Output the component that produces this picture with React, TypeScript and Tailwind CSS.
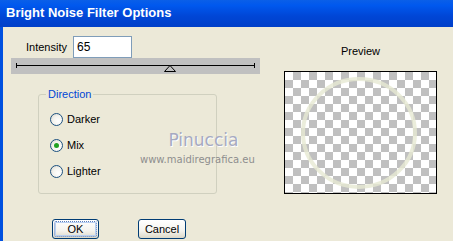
import React from "react";

const font = { fontFamily: '"Liberation Sans", Arial, sans-serif' };
const wm = { fontFamily: '"DejaVu Sans", sans-serif' };

function Radio({ label, checked }: { label: string; checked?: boolean }) {
  return (
    <div className="flex h-[13px] items-center gap-[4px]">
      <span className="flex h-[13px] w-[13px] items-center justify-center rounded-full border border-[#1c5180] bg-[radial-gradient(circle_at_65%_65%,#ffffff_0%,#f4f3ee_50%,#d6d3c8_100%)]">
        {checked && <span className="h-[5px] w-[5px] rounded-full bg-[#21a121]" />}
      </span>
      <span className="text-[11px] leading-[13px] text-black">{label}</span>
    </div>
  );
}

export default function App() {
  return (
    <div className="relative flex h-[241px] w-[453px] flex-col overflow-hidden bg-[#ece9d8]" style={font}>
      <div className="flex h-[27px] items-center bg-[linear-gradient(180deg,#0a5fe8_0%,#0058ee_20%,#0046d6_60%,#003fc8_100%)] pl-[6px] pb-[1px] text-[13px] font-bold text-white">
        Bright Noise Filter Options
      </div>

      <div className="relative flex flex-1 border-l-[3px] border-[#0050e0]">
        <div className="flex w-[262px] flex-col">
          <div className="mt-[9px] flex items-center pl-[23px]">
            <span className="text-[11px] leading-[13px] text-black">Intensity</span>
            <div className="ml-[6px] flex h-[22px] w-[59px] items-center border border-[#7f9db9] bg-white pl-[3px] text-[12px] text-black">
              65
            </div>
          </div>

          <div className="relative ml-[8px] h-[16px] w-[249px] bg-[#c0c0c0]">
            <div className="absolute left-[5px] top-[7px] h-px w-[239px] bg-black" />
            <div className="absolute left-[5px] top-[5px] h-[5px] w-px bg-black" />
            <div className="absolute left-[243px] top-[5px] h-[5px] w-px bg-black" />
            <svg className="absolute left-[153px] top-[7px]" width="12" height="7" viewBox="0 0 12 7">
              <path d="M6 0.5 L11.5 6.5 L0.5 6.5 Z" fill="#c0c0c0" stroke="#000" strokeWidth="1" />
            </svg>
          </div>

          <div className="relative ml-[35px] mt-[20px] h-[100px] w-[179px] rounded-[3px] border border-[#d0d0bf] pl-[11px] pt-[18px]">
            <span className="absolute -top-[7px] left-[7px] bg-[#ece9d8] px-[2px] text-[11px] leading-[13px] text-[#0046d5]">
              Direction
            </span>
            <div className="flex flex-col gap-[13px]">
              <Radio label="Darker" />
              <Radio label="Mix" checked />
              <Radio label="Lighter" />
            </div>
          </div>

          <div className="ml-[49px] mt-[25px] flex gap-[39px]">
            <div className="flex h-[20px] w-[47px] items-center justify-center rounded-[3px] border border-[#003c74] bg-[linear-gradient(180deg,#ffffff_0%,#f4f3ee_60%,#dcd8c8_100%)] p-[1px]">
              <div className="flex h-full w-full items-center justify-center rounded-[2px] border border-dotted border-[#5a7fc0] text-[11px] text-black shadow-[inset_0_0_0_1px_#b8cff2]">
                OK
              </div>
            </div>
            <div className="flex h-[20px] w-[48px] items-center justify-center rounded-[3px] border border-[#003c74] bg-[linear-gradient(180deg,#ffffff_0%,#f4f3ee_60%,#dcd8c8_100%)] text-[11px] text-black">
              Cancel
            </div>
          </div>
        </div>

        <div className="ml-[19px] flex flex-col items-center">
          <span className="mt-[18px] text-[11px] leading-[13px] text-black">Preview</span>
          <div className="relative mt-[13px] h-[123px] w-[153px] border border-black bg-[repeating-conic-gradient(#c0c0c0_0_25%,#ffffff_0_50%)] bg-[length:16px_16px]">
            <svg className="absolute inset-0" width="151" height="121" viewBox="0 0 151 121">
              <ellipse cx="74" cy="61" rx="56" ry="54" fill="none" stroke="#e6e8d2" strokeOpacity="0.8" strokeWidth="4" />
            </svg>
          </div>
        </div>

        <div className="pointer-events-none absolute left-[137px] top-[103px] flex flex-col items-center">
          <span className="pl-[12px] text-[17px] leading-[20px] text-[#a6aac2] [text-shadow:1px_1px_0_#ffffff]" style={wm}>
            Pinuccia
          </span>
          <span className="mt-[4px] text-[10px] leading-[12px] text-[#8e8e8e]" style={wm}>
            www.maidiregrafica.eu
          </span>
        </div>
      </div>
    </div>
  );
}
